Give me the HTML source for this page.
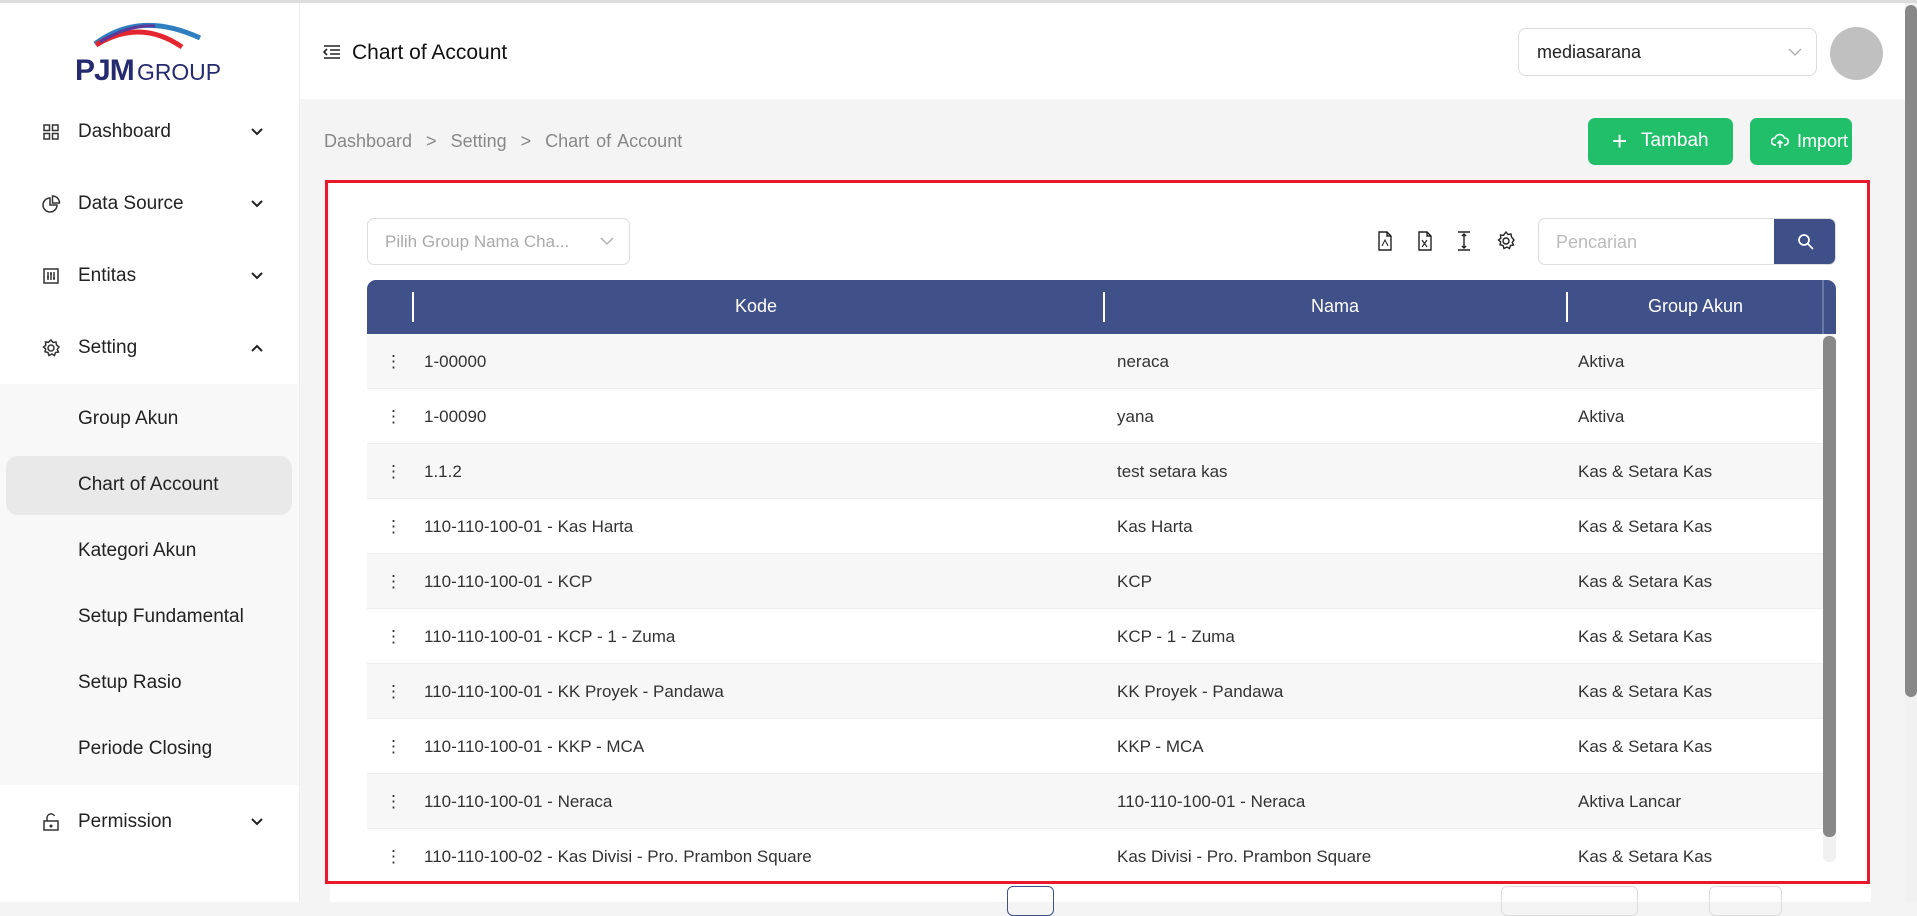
<!DOCTYPE html>
<html><head><meta charset="utf-8"><style>
*{box-sizing:border-box;margin:0;padding:0}
body{width:1917px;height:902px;overflow:hidden;background:#f4f4f4;font-family:"Liberation Sans",sans-serif;color:#222;position:relative}
.abs{position:absolute}
.side{left:0;top:3px;width:300px;height:899px;background:#fff;border-right:1px solid #eee}
.mi{position:absolute;left:0;width:300px;height:24px;font-size:19px;color:#222}
.mi .t{position:absolute;left:78px;top:0}
.mi svg.ic{position:absolute;left:41px;top:1px}
.mi .ch{position:absolute;left:250px;top:4px}
.sub{position:absolute;left:78px;font-size:19px;color:#222}
.row{position:absolute;left:367px;width:1456px;height:55px;font-size:17px;color:#333;border-bottom:1px solid #eee}
.row span{position:absolute;top:18px}
</style></head><body>
<div class="abs" style="left:0;top:0;width:1917px;height:3px;background:#ddd"></div>
<div class="abs side"></div>
<!-- logo -->
<svg class="abs" style="left:70px;top:12px" width="160" height="75" viewBox="0 0 160 75">
<path d="M25 32 Q70 -2 130 26" stroke="#2d7fbf" stroke-width="5" fill="none"/>
<path d="M26 33 Q70 6 112 35" stroke="#e3262f" stroke-width="5" fill="none"/>
<path d="M30 30 Q60 12 85 14" stroke="#5b3a9a" stroke-width="3" fill="none"/>
<text x="5" y="68" font-family="Liberation Sans" font-weight="bold" font-size="30" fill="#262a6e" letter-spacing="-1">PJM</text>
<text x="67" y="68" font-family="Liberation Sans" font-size="23" fill="#262a6e" textLength="84" lengthAdjust="spacingAndGlyphs">GROUP</text>
</svg>
<div class="mi" style="top:121px"><svg class="ic" width="20" height="20" viewBox="0 0 20 20" fill="none" stroke="#333" stroke-width="1.5"><rect x="3" y="3" width="5.5" height="5.5"/><rect x="11.5" y="3" width="5.5" height="5.5"/><rect x="3" y="11.5" width="5.5" height="5.5"/><rect x="11.5" y="11.5" width="5.5" height="5.5"/></svg><span class="t">Dashboard</span><svg class="ch" width="14" height="14" viewBox="0 0 14 14"><path d="M2 4l5 5 5-5" stroke="#222" stroke-width="2" fill="none"/></svg></div>
<div class="mi" style="top:193px"><svg class="ic" width="20" height="20" viewBox="0 0 20 20" fill="none" stroke="#333" stroke-width="1.5"><path d="M9 4a7 7 0 1 0 7 7H9z"/><path d="M11.5 2v7h7a7 7 0 0 0-7-7z"/></svg><span class="t">Data Source</span><svg class="ch" width="14" height="14" viewBox="0 0 14 14"><path d="M2 4l5 5 5-5" stroke="#222" stroke-width="2" fill="none"/></svg></div>
<div class="mi" style="top:265px"><svg class="ic" width="20" height="20" viewBox="0 0 20 20" fill="none" stroke="#333" stroke-width="1.5"><rect x="3" y="3" width="14" height="14"/><path d="M7 6v8M10 6v8M13 6v8M6 11h2M9 8h2M12 12h2"/></svg><span class="t">Entitas</span><svg class="ch" width="14" height="14" viewBox="0 0 14 14"><path d="M2 4l5 5 5-5" stroke="#222" stroke-width="2" fill="none"/></svg></div>
<div class="mi" style="top:337px"><svg class="ic" width="20" height="20" viewBox="0 0 20 20" fill="none" stroke="#333" stroke-width="1.5"><circle cx="10" cy="10" r="3"/><path d="M10 2l2 2.5 3-.5.5 3L18 9l-1.8 2.3L17.5 14l-3 .5-1 3-2.6-1.5L8 17.5l-1-3-3-.8.7-2.8L2.5 9l2.3-1.8L4.5 4l3 .3z"/></svg><span class="t">Setting</span><svg class="ch" width="14" height="14" viewBox="0 0 14 14"><path d="M2 10l5-5 5 5" stroke="#222" stroke-width="2" fill="none"/></svg></div>
<div class="abs" style="left:0;top:384px;width:299px;height:401px;background:#f8f8f8"></div>
<div class="abs" style="left:6px;top:456px;width:286px;height:59px;background:#e9e9e9;border-radius:12px"></div>
<div class="sub" style="top:408px">Group Akun</div>
<div class="sub" style="top:474px">Chart of Account</div>
<div class="sub" style="top:540px">Kategori Akun</div>
<div class="sub" style="top:606px">Setup Fundamental</div>
<div class="sub" style="top:672px">Setup Rasio</div>
<div class="sub" style="top:738px">Periode Closing</div>
<div class="mi" style="top:811px"><svg class="ic" width="20" height="20" viewBox="0 0 20 20" fill="none" stroke="#333" stroke-width="1.5"><rect x="3" y="9" width="14" height="9"/><path d="M6 9V6a4 4 0 0 1 7.5-2"/><circle cx="10" cy="14" r="0.8" fill="#333"/></svg><span class="t">Permission</span><svg class="ch" width="14" height="14" viewBox="0 0 14 14"><path d="M2 4l5 5 5-5" stroke="#222" stroke-width="2" fill="none"/></svg></div>

<!-- header -->
<div class="abs" style="left:300px;top:3px;width:1605px;height:96px;background:#fff"></div>
<svg class="abs" style="left:323px;top:44px" width="18" height="16" viewBox="0 0 18 16" stroke="#222" stroke-width="1.6" fill="none"><path d="M1 2h16M7 6h10M7 10h10M1 14h16M4 5l-3 3 3 3"/></svg>
<div class="abs" style="left:352px;top:41px;font-size:21px;color:#111">Chart of Account</div>
<div class="abs" style="left:1518px;top:28px;width:299px;height:48px;border:1px solid #ddd;border-radius:8px;background:#fff"><span class="abs" style="left:18px;top:13px;font-size:18px;color:#222">mediasarana</span><svg class="abs" style="left:268px;top:17px" width="16" height="12"><path d="M2 3l6 6 6-6" stroke="#aaa" stroke-width="1.3" fill="none"/></svg></div>
<div class="abs" style="left:1830px;top:27px;width:53px;height:53px;border-radius:50%;background:#c0c0c0"></div>
<div class="abs" style="left:1905px;top:3px;width:12px;height:899px;background:#f1f1f1"></div>
<div class="abs" style="left:1905px;top:5px;width:12px;height:692px;background:#888;border-radius:6px"></div>

<!-- breadcrumb -->
<div class="abs" style="left:324px;top:131px;font-size:18px;color:#888;word-spacing:2px">Dashboard &nbsp;&gt;&nbsp; Setting &nbsp;&gt;&nbsp; Chart of Account</div>
<div class="abs" style="left:1588px;top:118px;width:145px;height:47px;background:#22bf6b;border-radius:7px;color:#fff;font-size:19px"><span class="abs" style="left:24px;top:8px;font-size:26px;font-weight:300">+</span><span class="abs" style="left:53px;top:12px">Tambah</span></div>
<div class="abs" style="left:1750px;top:118px;width:102px;height:47px;background:#22bf6b;border-radius:7px;color:#fff;font-size:18px;white-space:nowrap"><svg class="abs" style="left:21px;top:15px" width="18" height="16" viewBox="0 0 18 16" fill="none" stroke="#fff" stroke-width="1.6"><path d="M5 12H4a3.5 3.5 0 0 1 0-7 5 5 0 0 1 9.5 0 3.5 3.5 0 0 1 .5 7h-1M9 15V8M6.5 10.5L9 8l2.5 2.5"/></svg><span class="abs" style="left:47px;top:13px">Import</span></div>

<!-- card -->
<div class="abs" style="left:330px;top:182px;width:1541px;height:720px;background:#fff"></div>
<div class="abs" style="left:325px;top:180px;width:1545px;height:704px;border:3px solid #e8192c"></div>
<div class="abs" style="left:367px;top:218px;width:263px;height:47px;border:1px solid #ddd;border-radius:7px"><span class="abs" style="left:17px;top:13px;font-size:17px;color:#aaa">Pilih Group Nama Cha...</span><svg class="abs" style="left:232px;top:17px" width="14" height="10"><path d="M1 2l6 6 6-6" stroke="#aaa" stroke-width="1.3" fill="none"/></svg></div>
<svg class="abs" style="left:1377px;top:229px" width="145" height="24" viewBox="0 0 145 24" fill="none" stroke="#222" stroke-width="1.4">
<path d="M2 3h8l4 4v14H2z M10 3v4h4"/><path d="M5 17l3-6 3 6" stroke-width="1"/>
<path d="M42 3h8l4 4v14H42z M50 3v4h4"/><path d="M45 11l5 7M50 11l-5 7" stroke-width="1.1"/>
<path d="M81 3h12M81 21h12M87 5v14M85 17l2 2 2-2M85 7l2-2 2 2"/>
<circle cx="129" cy="12" r="3"/><path d="M129 3l2 2.5 3-.5.5 3L137 11l-1.8 2.3L136.5 16l-3 .5-1 3-2.6-1.5L127 19.5l-1-3-3-.8.7-2.8L121.5 11l2.3-1.8L123.5 6l3 .3z"/>
</svg>
<div class="abs" style="left:1538px;top:218px;width:298px;height:47px;border:1px solid #ddd;border-radius:7px;overflow:hidden"><span class="abs" style="left:17px;top:13px;font-size:18px;color:#bbb">Pencarian</span><div class="abs" style="left:235px;top:-1px;width:63px;height:48px;background:#3f5089"><svg class="abs" style="left:23px;top:15px" width="18" height="18" fill="none" stroke="#fff" stroke-width="1.7"><circle cx="7" cy="7" r="5"/><path d="M11 11l5 5"/></svg></div></div>

<!-- table header -->
<div class="abs" style="left:367px;top:280px;width:1469px;height:54px;background:#405089;border-radius:9px 9px 0 0;color:#fff;font-size:18px">
<div class="abs" style="left:45px;top:12px;width:2px;height:30px;background:#fff"></div>
<div class="abs" style="left:736px;top:12px;width:2px;height:30px;background:#fff"></div>
<div class="abs" style="left:1199px;top:12px;width:2px;height:30px;background:#fff"></div>
<div class="abs" style="left:1455px;top:0;width:2px;height:54px;background:#6a78a8"></div>
<span class="abs" style="left:368px;top:16px">Kode</span>
<span class="abs" style="left:944px;top:16px">Nama</span>
<span class="abs" style="left:1281px;top:16px">Group Akun</span>
</div>

<div class="row" style="top:334px;background:#f7f7f7"><span style="left:18px">⋮</span><span style="left:57px">1-00000</span><span style="left:750px">neraca</span><span style="left:1211px">Aktiva</span></div>
<div class="row" style="top:389px"><span style="left:18px">⋮</span><span style="left:57px">1-00090</span><span style="left:750px">yana</span><span style="left:1211px">Aktiva</span></div>
<div class="row" style="top:444px;background:#f7f7f7"><span style="left:18px">⋮</span><span style="left:57px">1.1.2</span><span style="left:750px">test setara kas</span><span style="left:1211px">Kas &amp; Setara Kas</span></div>
<div class="row" style="top:499px"><span style="left:18px">⋮</span><span style="left:57px">110-110-100-01 - Kas Harta</span><span style="left:750px">Kas Harta</span><span style="left:1211px">Kas &amp; Setara Kas</span></div>
<div class="row" style="top:554px;background:#f7f7f7"><span style="left:18px">⋮</span><span style="left:57px">110-110-100-01 - KCP</span><span style="left:750px">KCP</span><span style="left:1211px">Kas &amp; Setara Kas</span></div>
<div class="row" style="top:609px"><span style="left:18px">⋮</span><span style="left:57px">110-110-100-01 - KCP - 1 - Zuma</span><span style="left:750px">KCP - 1 - Zuma</span><span style="left:1211px">Kas &amp; Setara Kas</span></div>
<div class="row" style="top:664px;background:#f7f7f7"><span style="left:18px">⋮</span><span style="left:57px">110-110-100-01 - KK Proyek - Pandawa</span><span style="left:750px">KK Proyek - Pandawa</span><span style="left:1211px">Kas &amp; Setara Kas</span></div>
<div class="row" style="top:719px"><span style="left:18px">⋮</span><span style="left:57px">110-110-100-01 - KKP - MCA</span><span style="left:750px">KKP - MCA</span><span style="left:1211px">Kas &amp; Setara Kas</span></div>
<div class="row" style="top:774px;background:#f7f7f7"><span style="left:18px">⋮</span><span style="left:57px">110-110-100-01 - Neraca</span><span style="left:750px">110-110-100-01 - Neraca</span><span style="left:1211px">Aktiva Lancar</span></div>
<div class="row" style="top:829px;height:37px;overflow:hidden;border:none"><span style="left:18px">⋮</span><span style="left:57px">110-110-100-02 - Kas Divisi - Pro. Prambon Square</span><span style="left:750px">Kas Divisi - Pro. Prambon Square</span><span style="left:1211px">Kas &amp; Setara Kas</span></div>
<div class="abs" style="left:1823px;top:334px;width:13px;height:528px;background:#f1f1f1;border-radius:6px"></div>
<div class="abs" style="left:1823px;top:336px;width:13px;height:501px;background:#888;border-radius:6px"></div>

<div class="abs" style="left:330px;top:884px;width:1541px;height:18px;background:#fff"></div>
<div class="abs" style="left:1007px;top:886px;width:47px;height:30px;border:1px solid #405089;border-radius:6px"></div>
<div class="abs" style="left:1501px;top:886px;width:137px;height:30px;border:1px solid #ddd;border-radius:6px"></div>
<div class="abs" style="left:1709px;top:886px;width:73px;height:30px;border:1px solid #ddd;border-radius:6px"></div>
</body></html>
